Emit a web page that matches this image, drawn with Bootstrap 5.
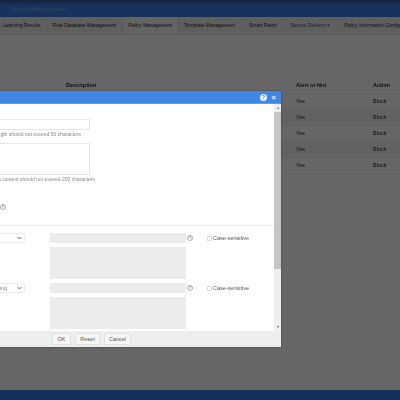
<!DOCTYPE html>
<html lang="en">
<head>
<meta charset="utf-8">
<title>Policy Management</title>
<link rel="stylesheet" href="https://cdn.jsdelivr.net/npm/bootstrap@5.3.0/dist/css/bootstrap.min.css">
<style>
html,body{width:400px;height:400px;overflow:hidden;margin:0;background:#fff}
body{font-family:"Liberation Sans",Arial,sans-serif;font-size:5.5px;color:#222}
.shot{position:relative;width:400px;height:400px;overflow:hidden;filter:blur(.6px)}
.app{height:400px}
.app-head{height:17px;background:linear-gradient(#2c5aa0,#3a7fe6 30%,#3a80e8);color:#80ade8;font-size:6px;padding-left:10px;border-top:1px solid #2f5a9c}
.app-nav{height:18px;background:#ededed;color:#222;border-bottom:1px solid #e2e2e2;white-space:nowrap;overflow:hidden;font-size:5px}
.nav-it{height:100%;padding:0 5.5px;flex:none}
.nav-first{margin-left:3px;padding-left:0;margin-right:1px}
.nav-sel{background:#f7f7f7;border-left:1px solid #ddd;border-right:1px solid #ddd}
.nav-tight{margin-left:3px}
.nav-blue{color:#1f4f90;margin-left:3px;margin-right:3px}
.app-main{padding-top:43px}
.rule-tbl{width:400px;table-layout:fixed;margin:0;font-size:5.5px;--bs-table-bg:transparent;--bs-table-color:#222}
.rule-tbl>*>tr>*{height:16px;padding:0;vertical-align:middle;border-bottom:1px solid #f4f4f4}
.rule-tbl th{font-weight:700;height:15px}
.rule-tbl tbody tr:nth-child(even){background:#f6f6f6}
.w-a{width:66px}.w-b{width:230px}.w-c{width:77px}.w-d{width:27px}
.app-foot{height:10px;background:#3578e0}
.veil{position:absolute;inset:0;background:rgba(0,0,0,.6)}
.dlg{position:absolute;left:-219px;top:91px;width:500px;height:256px;background:#fff;box-shadow:0 0 2px rgba(0,0,0,.4)}
.dlg-title{height:13px;background:#3f87e6;color:#fff;padding-right:4px;gap:3px;border-bottom:1px solid #5a9bf0}
.dlg-q{width:7px;height:7px;border-radius:50%;background:#e8f0fb;color:#3f87e6;font-size:5.5px;font-weight:700;line-height:7px;text-align:center}
.dlg-x{width:7px;height:7px;font-size:8px;line-height:7px;text-align:center;font-weight:700;color:#e8f0fb}
.dlg-body{height:227px;overflow:hidden}
.dlg-form{width:493px;padding-top:15px;padding-left:219px}
.dlg-bar{width:7px;background:#f0f0f0;position:relative}
.dlg-thumb{position:absolute;top:8px;left:0;width:7px;height:157px;background:#c4c4c4}
.dlg-arrow{height:8px;color:#666;font-size:4px;line-height:8px;text-align:center}
.dlg-arrow-b{position:absolute;bottom:0;left:0;width:7px}
.dlg-foot{height:16px;background:#eee;padding-left:271px;gap:4px;padding-top:2px}
.f-box{display:block;margin-left:-219px;padding:0;border:1px solid #e6e6e6;border-radius:0;background:#fff;box-shadow:none}
.f-one{width:309px;height:11px}
.f-two{width:309px;height:32px}
.hint{color:#888;white-space:nowrap;line-height:7px;font-size:5px}
.hint-a{margin-left:-219px;width:300px;text-align:right;height:7px}
.q-mark{display:inline-block;flex:none;width:6px;height:6px;border-radius:50%;background:#fff;border:1px solid #aaa;color:#888;font-size:4px;line-height:4px;text-align:center;font-weight:700}
.sec-q{height:7px;margin-top:20px}
.dlg-rule{height:1px;background:#e8e8e8;margin:15px 0 7px -219px;width:492px}
.row-sel{height:10px;width:250px}
.sel-box{flex:none;width:25px;height:10px;background:#fff;color:#777;border:1px solid #ececec;border-left:0;border-radius:0 2px 2px 0;padding-right:2px;justify-content:flex-end;margin-right:25px}
.sel-tx{margin-right:auto;color:#888}
.sel-ch{display:block;flex:none}
.g-in{width:136px;height:10px;background:#ececec;flex:none}
.g-ar{width:136px;height:32px;background:#ececec;margin-left:50px;margin-top:4px}
.row-sel .q-mark{margin-left:1px}
.chk{width:5px;height:5px;border:1px solid #ddd;background:#fff;margin-left:14px;margin-right:1px;flex:none}
.chk-tx{color:#555;white-space:nowrap}
.gap-b{height:4px}
.btn-x{height:12px;line-height:10px;font-size:5.5px;padding:0;background:#f6f6f6;border:1px solid #e0e0e0;color:#555;border-radius:1px;--bs-btn-font-size:5.5px}
.b-ok{width:19px}.b-re{width:25px}.b-ca{width:27px}
</style>
</head>
<body>
<div class="shot">
  <div class="app d-flex flex-column">
    <div class="app-head d-flex align-items-center">Secure Management</div>
    <div class="app-nav d-flex align-items-center">
      <div class="nav-it nav-first d-flex align-items-center">Learning Results</div>
      <div class="nav-it d-flex align-items-center">Rule Database Management</div>
      <div class="nav-it d-flex align-items-center nav-sel">Policy Management</div>
      <div class="nav-it d-flex align-items-center">Template Management</div>
      <div class="nav-it nav-tight d-flex align-items-center">Smart Patch</div>
      <div class="nav-it d-flex align-items-center nav-blue">Secure Delivery ▾</div>
      <div class="nav-it d-flex align-items-center">Policy Information Config</div>
    </div>
    <div class="app-main flex-grow-1">
      <table class="table rule-tbl">
        <colgroup><col class="w-a"><col class="w-b"><col class="w-c"><col class="w-d"></colgroup>
        <thead><tr><th></th><th>Description</th><th>Alert or Not</th><th>Action</th></tr></thead>
        <tbody>
          <tr><td></td><td></td><td>Yes</td><td>Block</td></tr>
          <tr><td></td><td></td><td>Yes</td><td>Block</td></tr>
          <tr><td></td><td></td><td>Yes</td><td>Block</td></tr>
          <tr><td></td><td></td><td>Yes</td><td>Block</td></tr>
          <tr><td></td><td></td><td>Yes</td><td>Block</td></tr>
        </tbody>
      </table>
    </div>
    <div class="app-foot"></div>
  </div>
  <div class="veil"></div>
  <div class="dlg d-flex flex-column">
    <div class="dlg-title d-flex align-items-center justify-content-end">
      <span class="dlg-q">?</span><span class="dlg-x">×</span>
    </div>
    <div class="dlg-body d-flex">
      <div class="dlg-form flex-grow-1">
        <div class="f-box f-one form-control"></div>
        <div class="hint hint-a" style="margin-top:1px">The name length should not exceed 50 characters</div>
        <div class="f-box f-two form-control" style="margin-top:5px"></div>
        <div class="hint hint-a" style="margin-top:1px;width:314px">The description content should not exceed 200 characters</div>
        <div class="sec-q d-flex align-items-center"><span class="q-mark">?</span></div>
        <div class="dlg-rule"></div>
        <div class="row-sel d-flex align-items-center">
          <div class="sel-box d-flex align-items-center"><svg class="sel-ch" width="5" height="4" viewBox="0 0 5 4"><path d="M.5 1l2 2 2-2" fill="none" stroke="#666" stroke-width="1"/></svg></div>
          <div class="g-in"></div><span class="q-mark">?</span>
          <span class="chk"></span><span class="chk-tx">Case-sensitive</span>
        </div>
        <div class="g-ar"></div>
        <div class="gap-b"></div>
        <div class="row-sel d-flex align-items-center">
          <div class="sel-box d-flex align-items-center"><span class="sel-tx">ing</span><svg class="sel-ch" width="5" height="4" viewBox="0 0 5 4"><path d="M.5 1l2 2 2-2" fill="none" stroke="#666" stroke-width="1"/></svg></div>
          <div class="g-in"></div><span class="q-mark">?</span>
          <span class="chk"></span><span class="chk-tx">Case-sensitive</span>
        </div>
        <div class="g-ar"></div>
      </div>
      <div class="dlg-bar">
        <div class="dlg-arrow">▴</div>
        <div class="dlg-thumb"></div>
        <div class="dlg-arrow dlg-arrow-b">▾</div>
      </div>
    </div>
    <div class="dlg-foot d-flex">
      <button type="button" class="btn btn-x b-ok">OK</button>
      <button type="button" class="btn btn-x b-re">Reset</button>
      <button type="button" class="btn btn-x b-ca">Cancel</button>
    </div>
  </div>
</div>
<script src="https://cdn.jsdelivr.net/npm/bootstrap@5.3.0/dist/js/bootstrap.bundle.min.js"></script>
</body>
</html>
